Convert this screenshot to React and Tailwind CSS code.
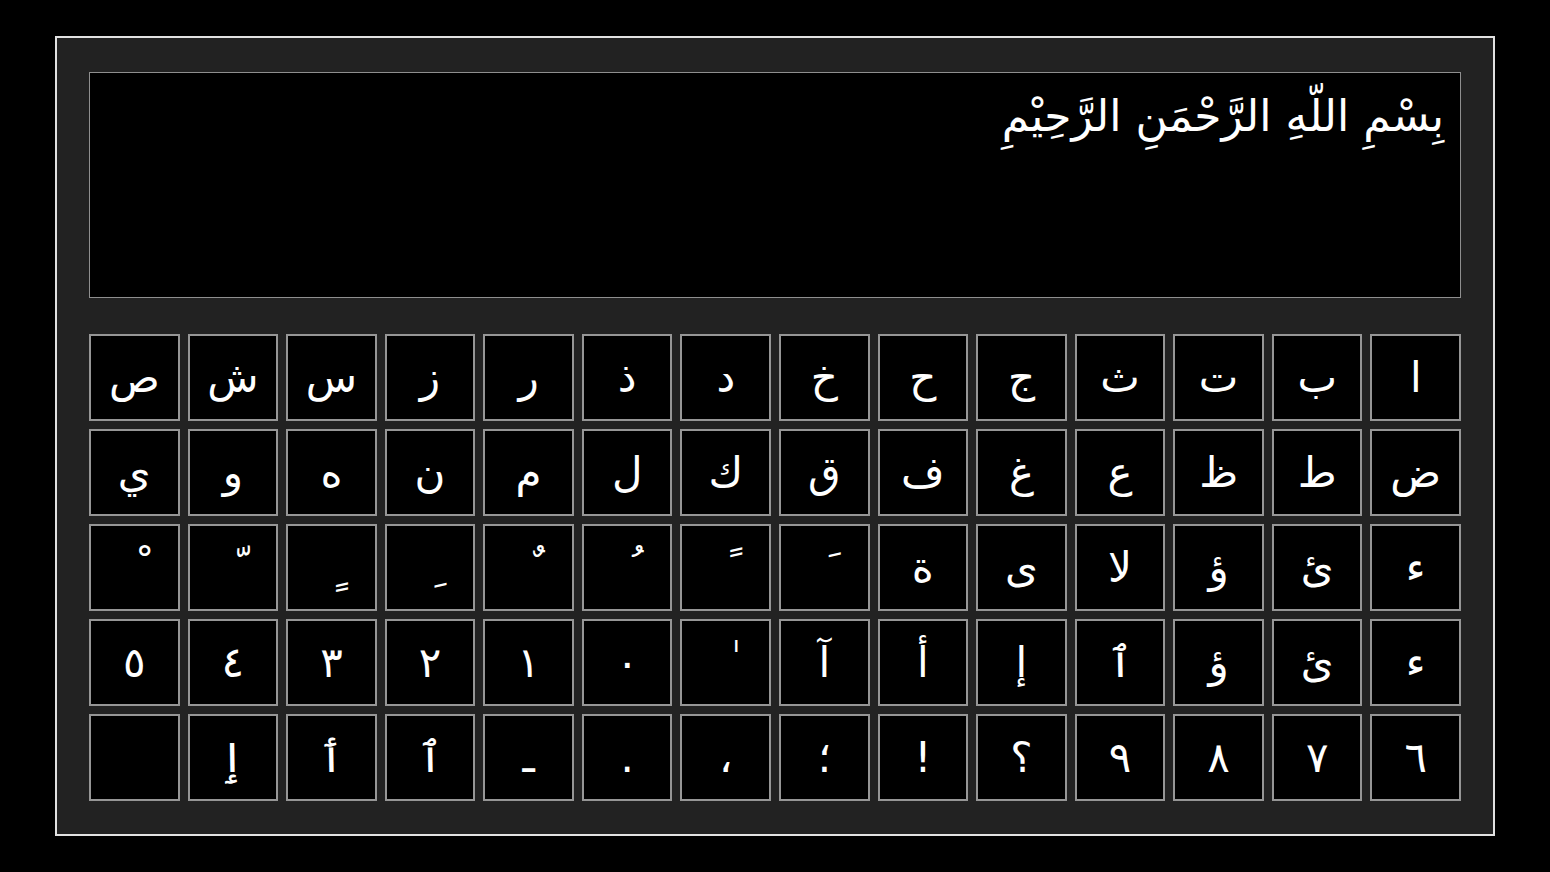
import React, { useState } from 'react';

const ROWS = [
  ['ا', 'ب', 'ت', 'ث', 'ج', 'ح', 'خ', 'د', 'ذ', 'ر', 'ز', 'س', 'ش', 'ص'],
  ['ض', 'ط', 'ظ', 'ع', 'غ', 'ف', 'ق', 'ك', 'ل', 'م', 'ن', 'ه', 'و', 'ي'],
  ['ء', 'ئ', 'ؤ', 'لا', 'ى', 'ة', '\u064E', '\u064B', '\u064F', '\u064C', '\u0650', '\u064D', '\u0651', '\u0652'],
  ['ء', 'ئ', 'ؤ', 'ٱ', 'إ', 'أ', 'آ', '\u0670', '٠', '١', '٢', '٣', '٤', '٥'],
  ['٦', '٧', '٨', '٩', '؟', '!', '؛', '،', '.', 'ـ', 'ٱ', 'ٲ', 'ٳ', ' '],
];

const FONT = "font-['DejaVu_Sans',sans-serif]";

export default function App() {
  const [text, setText] = useState('بِسْمِ اللّهِ الرَّحْمَنِ الرَّحِيْمِ');

  const press = (ch) => setText(prev => prev + ch);

  return (
    <div className="w-full h-[872px] bg-black flex items-center justify-center">
      <div className="w-[1440px] h-[800px] bg-[#222222] border-2 border-[#e2e2e2] px-[32px] pt-[34px] flex flex-col">
        <div
          dir="rtl"
          className={`h-[226px] bg-black border border-[#8f8f8f] px-[16px] pt-[14px] text-white text-[44px] leading-[58px] ${FONT}`}
        >
          {text}
        </div>

        <div dir="rtl" className="mt-[36px] grid grid-cols-14 gap-x-[8px] gap-y-[8px]">
          {ROWS.flat().map((ch, i) => (
            <button
              key={i}
              onClick={() => press(ch)}
              className={`h-[87px] bg-black border-2 border-[#969696] flex items-center justify-center text-white text-[42px] ${FONT}`}
            >
              {ch}
            </button>
          ))}
        </div>
      </div>
    </div>
  );
}
